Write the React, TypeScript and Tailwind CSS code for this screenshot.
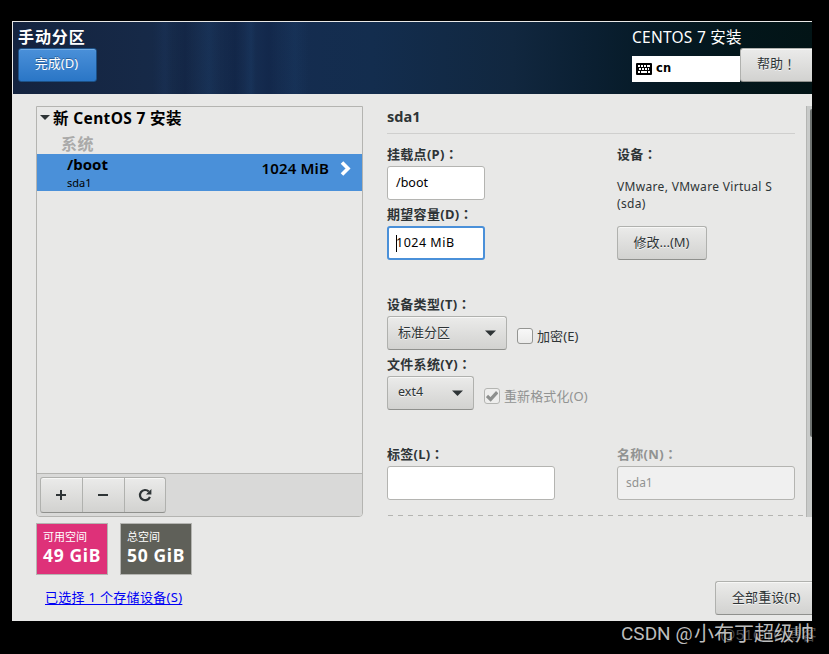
import type { ReactNode } from "react";

const button =
  "flex items-center rounded-[3px] border border-[#b0b1ae] border-b-[#8f908d] bg-linear-to-b from-[#ebebea] to-[#d2d2d0] shadow-[inset_0_1px_0_#f7f7f6] [text-shadow:0_1px_0_#f4f4f4]";

function Wide({ children }: { children: ReactNode }) {
  return <span className="font-['Noto_Sans_CJK_TC',sans-serif]">{children}</span>;
}

function Label({ children, dim }: { children: ReactNode; dim?: boolean }) {
  return (
    <div
      className={`flex h-[20px] items-center text-[13px] leading-5 font-bold tracking-[0.3px] ${dim ? "text-[#919392]" : "text-[#2e3436]"}`}
    >
      {children}
      <Wide>：</Wide>
    </div>
  );
}

function Caret({ className }: { className?: string }) {
  return (
    <svg className={className} width="11" height="6" viewBox="0 0 11 6">
      <path d="M0 .4h11L5.5 6z" fill="#2e3436" />
    </svg>
  );
}

function KeyboardIcon() {
  return (
    <svg width="16" height="12" viewBox="0 0 16 12">
      <rect width="16" height="12" rx="1" fill="#000" />
      <path
        d="M2 2h2v2H2zM5 2h2v2H5zM8 2h2v2H8zM11 2h3v2h-3zM3 5h2v2H3zM6 5h2v2H6zM9 5h2v2H9zM12 5h1v2h-1zM2 8h2v2H2zM5 8h6v2H5zM12 8h2v2h-2z"
        fill="#fff"
      />
    </svg>
  );
}

function Header() {
  return (
    <header className="flex h-[73px] border-t border-l border-[#e8e8e7] bg-[linear-gradient(90deg,transparent_140px,rgba(36,70,120,0.16)_152px,transparent_160px,rgba(0,10,40,0.12)_172px,transparent_180px,rgba(36,80,130,0.18)_196px,transparent_208px,rgba(0,10,40,0.14)_222px,transparent_230px,rgba(36,80,130,0.18)_238px,transparent_243px,rgba(0,10,40,0.12)_256px,transparent_266px,rgba(36,80,130,0.14)_282px,transparent_296px),linear-gradient(90deg,#14233f_0px,#162947_130px,#152c50_250px,#132d4e_360px,#11273f_500px,#0b2033_570px,#061a26_640px,#03161b_720px,#021416_800px)]">
      <div className="flex w-[614px] flex-col pl-[5px]">
        <h1 className="mt-[4px] h-[22px] text-[16px] leading-[22px] font-bold tracking-[0.9px] text-white">手动分区</h1>
        <button className="flex h-[34px] w-[79px] items-center justify-center rounded-[3px] border border-[#1c5187] bg-linear-to-b from-[#4a90d9] to-[#2a76c6] pr-[2px] pb-[2px] text-[13px] text-white shadow-[inset_0_1px_0_#74abe2] [text-shadow:0_-1px_0_#2c5f97]">
          完成(D)
        </button>
      </div>
      <div className="flex flex-1 flex-col pl-[5px]">
        <div className="mt-[5px] h-[21px] text-[15.5px] leading-[21px] tracking-[0.25px] text-white">CENTOS 7 安装</div>
        <div className="flex">
          <div className="mt-[8px] flex h-[26px] w-[108px] items-center gap-1 bg-white pl-1 text-[11.5px] font-bold text-black">
            <KeyboardIcon />
            <span className="font-['DejaVu_Sans','Noto_Sans',sans-serif] tracking-[0.2px]">cn</span>
          </div>
          <button className={`${button} h-[34px] w-[72px] justify-center rounded-r-none border-r-0 pb-[2px] text-[13px] text-[#2e3436]`}>
            帮助<Wide>！</Wide>
          </button>
        </div>
      </div>
    </header>
  );
}

function MountList() {
  return (
    <section className="flex h-[411px] w-[327px] flex-col rounded-b-[4px] border border-[#b4b4b1] text-black">
      <div className="flex h-[22px] items-center pl-[3px] text-[15.5px] font-bold tracking-[0.35px]">
        <svg className="mb-px" width="10" height="5" viewBox="0 0 10 5">
          <path d="M0 0h10L5 5z" fill="#2e3436" />
        </svg>
        <span className="ml-[3px] leading-[22px]">新 CentOS 7 安装</span>
      </div>
      <div className="h-[25px] pt-[4px] pl-6 text-[16px] leading-[22px] font-bold tracking-[0.6px] text-[#aaaaa9]">系统</div>
      <div className="flex h-[37px] bg-[#4a90d9] pl-[30px]">
        <div className="flex flex-1 flex-col">
          <b className="h-[21px] text-[15px] leading-[21px]">/boot</b>
          <span className="text-[11px] leading-4">sda1</span>
        </div>
        <b className="mt-[4px] text-[15px] leading-[21px] font-semibold tracking-[0.15px]">1024 MiB</b>
        <svg className="mt-[7px] mr-[11px] ml-[11px]" width="11" height="15" viewBox="0 0 11 15">
          <path d="M2 1.5 8 7.5 2 13.5" fill="none" stroke="#fff" strokeWidth="3.6" />
        </svg>
      </div>
      <div className="flex-1" />
      <div className="flex h-[43px] rounded-b-[3px] border-t border-[#b4b4b1] bg-[#d9d9d8] pt-[3px] pl-[3px]">
        <div className={`${button} h-[36px] w-[126px]`}>
          <div className="flex h-full w-[42px] items-center justify-center border-r border-[#b0b1ae] pr-px">
            <svg width="10" height="10" viewBox="0 0 10 10">
              <path d="M5 0v10M0 5h10" stroke="#2e3436" strokeWidth="2" />
            </svg>
          </div>
          <div className="flex h-full w-[42px] items-center justify-center border-r border-[#b0b1ae] pr-px">
            <svg width="10" height="10" viewBox="0 0 10 10">
              <path d="M0 5h10" stroke="#2e3436" strokeWidth="2" />
            </svg>
          </div>
          <div className="flex h-full flex-1 items-center justify-center pr-px">
            <svg width="14" height="14" viewBox="0 0 14 14">
              <path d="M11.9 8.8A5.1 5.1 0 1 1 10.8 3.6" fill="none" stroke="#2e3436" strokeWidth="2.2" />
              <path d="M13.4 1V6.4H8z" fill="#2e3436" />
            </svg>
          </div>
        </div>
      </div>
    </section>
  );
}

function Space({ title, size, className }: { title: string; size: string; className: string }) {
  return (
    <div className={`h-[52px] w-[72px] border border-[#b4b4b1] pt-[5px] pl-[6px] whitespace-nowrap text-white ${className}`}>
      <div className="text-[11px] leading-4">{title}</div>
      <div className="text-[17.5px] leading-[20px] font-bold tracking-[0.65px]">{size}</div>
    </div>
  );
}

const entry = "flex h-[34px] items-center rounded-[3px] border border-[#b4b4b1] bg-white pl-2 text-[12.5px] text-black";

function Details() {
  return (
    <section className="flex h-[411px] flex-1 flex-col pl-6 text-[#2e3436]">
      <h2 className="h-[28px] w-[408px] border-b border-[#cfcfce] text-[14.5px] leading-[21px] font-bold">sda1</h2>
      <div className="mt-[10px] grid h-[356px] grid-cols-[230px_178px] content-start">
        <div className="h-[150px]">
          <Label>挂载点(P)</Label>
          <div className={`${entry} mt-[2px] w-[98px]`}>/boot</div>
          <div className="mt-[4px]">
            <Label>期望容量(D)</Label>
          </div>
          <div className="mt-[2px] flex h-[34px] w-[98px] items-center rounded-[3px] border-2 border-[#4a90d9] bg-white pl-[7px] text-[12.5px] tracking-[0.5px] text-black">
            <span className="-mr-px h-[17px] w-px bg-black" />
            1024 MiB
          </div>
        </div>
        <div className="h-[150px]">
          <Label>设备</Label>
          <p className="mt-[14px] text-[12px] leading-[17px] tracking-[0.32px]">
            VMware, VMware Virtual S
            <br />
            (sda)
          </p>
          <button className={`${button} mt-[14px] h-[34px] w-[90px] justify-center pr-px pb-px text-[13px]`}>修改...(M)</button>
        </div>
        <div className="col-span-2 h-[150px]">
          <Label>设备类型(T)</Label>
          <div className="mt-[2px] flex h-[34px]">
            <div className={`${button} w-[120px] justify-between pr-[10px] pb-px pl-[10px] text-[13px]`}>
              标准分区
              <Caret />
            </div>
            <span className="mt-[12px] ml-[10px] size-4 rounded-[3px] border border-[#949592] bg-linear-to-b from-[#f8f8f8] to-[#ebebea]" />
            <span className="mt-[10px] ml-[4px] text-[13px] leading-5 tracking-[0.1px]">加密(E)</span>
          </div>
          <div className="mt-[4px]">
            <Label>文件系统(Y)</Label>
          </div>
          <div className="mt-[2px] flex h-[34px]">
            <div className={`${button} w-[87px] justify-between pr-[10px] pb-px pl-[10px] text-[12.5px]`}>
              ext4
              <Caret />
            </div>
            <span className="mt-[12px] ml-[10px] flex size-4 items-center justify-center rounded-[3px] border border-[#b4b5b2] bg-[#eeeeed]">
              <svg width="12" height="11" viewBox="0 0 12 11">
                <path d="M1 5 4.6 8.4 11.2 1.2" fill="none" stroke="#8d8f8e" strokeWidth="3.2" />
              </svg>
            </span>
            <span className="mt-[10px] ml-[4px] text-[13px] leading-5 tracking-[0.1px] text-[#919392]">重新格式化(O)</span>
          </div>
        </div>
        <div>
          <Label>标签(L)</Label>
          <div className={`${entry} mt-[2px] w-[168px]`} />
        </div>
        <div>
          <Label dim>名称(N)</Label>
          <div className="mt-[2px] flex h-[34px] items-center rounded-[3px] border border-[#b4b4b1] bg-[#f0f0f0] pl-2 text-[12px] text-[#919392]">
            sda1
          </div>
        </div>
      </div>
      <div className="mt-[15px] ml-px h-px w-[418px] bg-[repeating-linear-gradient(90deg,#b4b4b1_0px,#b4b4b1_5px,transparent_5px,transparent_10px)]" />
    </section>
  );
}

export default function App() {
  return (
    <div className="relative h-[654px] w-[829px] overflow-hidden bg-black pt-[21px] pl-3 font-['Noto_Sans','Noto_Sans_CJK_SC',sans-serif]">
      <main className="flex h-[600px] w-[800px] flex-col overflow-hidden bg-[#e8e8e7]">
        <Header />
        <div className="flex pt-3 pl-6">
          <MountList />
          <Details />
          <div className="h-[411px] w-[6px] border-l border-[#b4b5b3] bg-[#c8cac9] pt-[3px] pl-[3px]">
            <div className="h-[328px] rounded-l-[2px] bg-[#6e7271]" />
          </div>
        </div>
        <div className="flex gap-3 pt-[6px] pl-6">
          <Space title="可用空间" size="49 GiB" className="bg-[#de3179]" />
          <Space title="总空间" size="50 GiB" className="bg-[#5f6059]" />
        </div>
        <div className="flex justify-between pt-[6px] pl-[33px]">
          <a className="mt-[6px] text-[13px] leading-5 tracking-[0.3px] text-[#0000f5] underline underline-offset-2">已选择 1 个存储设备(S)</a>
          <button className={`${button} h-[34px] w-[97px] rounded-r-none border-r-0 pb-px pl-4 text-[13px] tracking-[0.1px] whitespace-nowrap text-[#2e3436]`}>
            全部重设(R)
          </button>
        </div>
      </main>
      <div className="absolute top-[624px] left-[720px] font-['Liberation_Sans','Noto_Sans_CJK_SC',sans-serif] text-[15.5px] leading-[22px] whitespace-nowrap text-[#484848]">
        @51CTO博客
      </div>
      <div className="absolute top-[621px] left-[621px] flex text-[20px] leading-[26px] whitespace-nowrap text-[#bdbdbd]">
        <span className="w-[73px] font-[Roboto,sans-serif] text-[19px]">CSDN @</span>
        小布丁超级帅
      </div>
    </div>
  );
}
